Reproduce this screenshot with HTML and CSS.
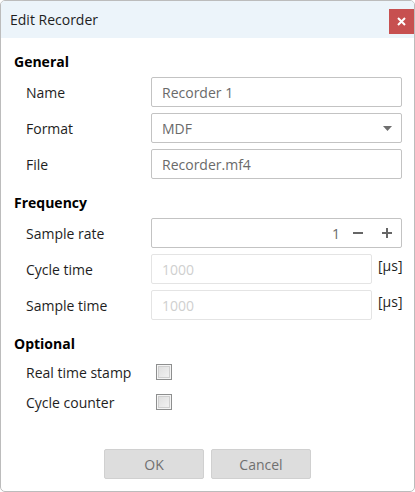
FILE: index.html
```html
<!DOCTYPE html>
<html>
<head>
<meta charset="utf-8">
<link rel="stylesheet" href="styles.css">
</head>
<body>
<div class="dialog">
  <div class="titlebar">
    <span class="title">Edit Recorder</span>
    <button class="close" aria-label="Close">
      <svg width="9" height="9" viewBox="0 0 9 9"><path d="M1 1L8 8M8 1L1 8" stroke="#fff" stroke-width="2" fill="none"/></svg>
    </button>
  </div>
  <div class="content">
    <div class="heading">General</div>
    <div class="rows">
      <div class="row"><span class="label">Name</span><div class="field"><span class="value">Recorder 1</span></div></div>
      <div class="row"><span class="label">Format</span><div class="field select"><span class="value">MDF</span>
        <svg class="arrow" width="9" height="5" viewBox="0 0 9 5"><path d="M0 0H9L4.5 5Z" fill="#6e6e6e"/></svg></div></div>
      <div class="row"><span class="label">File</span><div class="field"><span class="value">Recorder.mf4</span></div></div>
    </div>
    <div class="heading">Frequency</div>
    <div class="rows">
      <div class="row"><span class="label">Sample rate</span><div class="field spin"><span class="value num">1</span>
        <svg class="sbtn minus" width="12" height="12" viewBox="0 0 12 12"><rect x="1" y="5" width="10" height="2" fill="#666"/></svg>
        <svg class="sbtn plus" width="12" height="12" viewBox="0 0 12 12"><rect x="1" y="5" width="10" height="2" fill="#666"/><rect x="5" y="1" width="2" height="10" fill="#666"/></svg>
      </div></div>
      <div class="row"><span class="label">Cycle time</span><div class="field disabled"><span class="value">1000</span></div><span class="unit">[µs]</span></div>
      <div class="row"><span class="label">Sample time</span><div class="field disabled"><span class="value">1000</span></div><span class="unit">[µs]</span></div>
    </div>
    <div class="heading opt">Optional</div>
    <div class="checks">
      <div class="crow"><span class="label">Real time stamp</span><span class="checkbox"></span></div>
      <div class="crow"><span class="label">Cycle counter</span><span class="checkbox"></span></div>
    </div>
  </div>
  <div class="footer">
    <button class="btn">OK</button>
    <button class="btn">Cancel</button>
  </div>
</div>
</body>
</html>
```
FILE: styles.css
```css
* { box-sizing: border-box; }
html, body { margin: 0; padding: 0; background: #fff; }
body { font-family: "Segoe UI", "Open Sans", "Noto Sans", sans-serif; font-size: 14px; color: #1e1e1e; }
.dialog {
  width: 415px; height: 492px;
  border: 1px solid #bcbcbc; border-radius: 5px;
  display: flex; flex-direction: column;
  overflow: hidden;
}
.titlebar {
  height: 37px; flex: none;
  background: #ecf4fa;
  display: flex; justify-content: space-between; align-items: flex-start;
  padding-left: 9px;
}
.title { line-height: 37px; font-size: 14px; color: #1e1e1e; }
.close {
  margin-top: 8px; width: 25px; height: 25px; border: none; padding: 0;
  background: #c75050; display: flex; align-items: center; justify-content: center;
}
.content { padding: 14px 12px 0 13px; }
.heading { font-weight: 700; line-height: 20px; height: 20px; margin-bottom: 5px; color: #000; }
.heading.opt { margin-top: 1px; margin-bottom: 3px; }
.rows { display: flex; flex-direction: column; gap: 6px; margin-bottom: 14px; }
.row { display: flex; align-items: center; height: 30px; }
.label { width: 125px; flex: none; margin-left: 12px; color: #1e1e1e; }
.field {
  flex: 1; height: 30px; border: 1px solid #c3c3c3; border-radius: 2px;
  display: flex; align-items: center; padding: 0 10px; color: #6a6a6a;
}
.select { justify-content: space-between; padding-right: 9px; }
.spin { padding-right: 8px; }
.spin .num { margin-left: auto; }
.sbtn { flex: none; }
.minus { margin-left: 12px; }
.plus { margin-left: 17px; }
.disabled { flex: none; width: 221px; border-color: #e4e4e4; color: #cfcfcf; }
.unit { margin-left: 6px; align-self: flex-start; line-height: 24px; color: #1e1e1e; }
.checks { display: flex; flex-direction: column; }
.crow { display: flex; align-items: center; height: 30px; }
.crow .label { width: 130px; }
.checkbox {
  width: 16px; height: 16px; border: 1px solid #8e8f8f;
  background: linear-gradient(135deg, #dcdcdc, #f4f4f4);
  box-shadow: inset 0 0 0 1px #f4f4f4, inset 0 0 0 2px #cfcfcf;
}
.footer {
  margin-top: auto; display: flex; justify-content: center; gap: 7px;
  padding-bottom: 12px;
}
.btn {
  width: 100px; height: 30px; background: #dddddd; border: 1px solid #d0d0d0;
  border-radius: 2px; font-family: inherit; font-size: 14px; color: #707070;
}
```
